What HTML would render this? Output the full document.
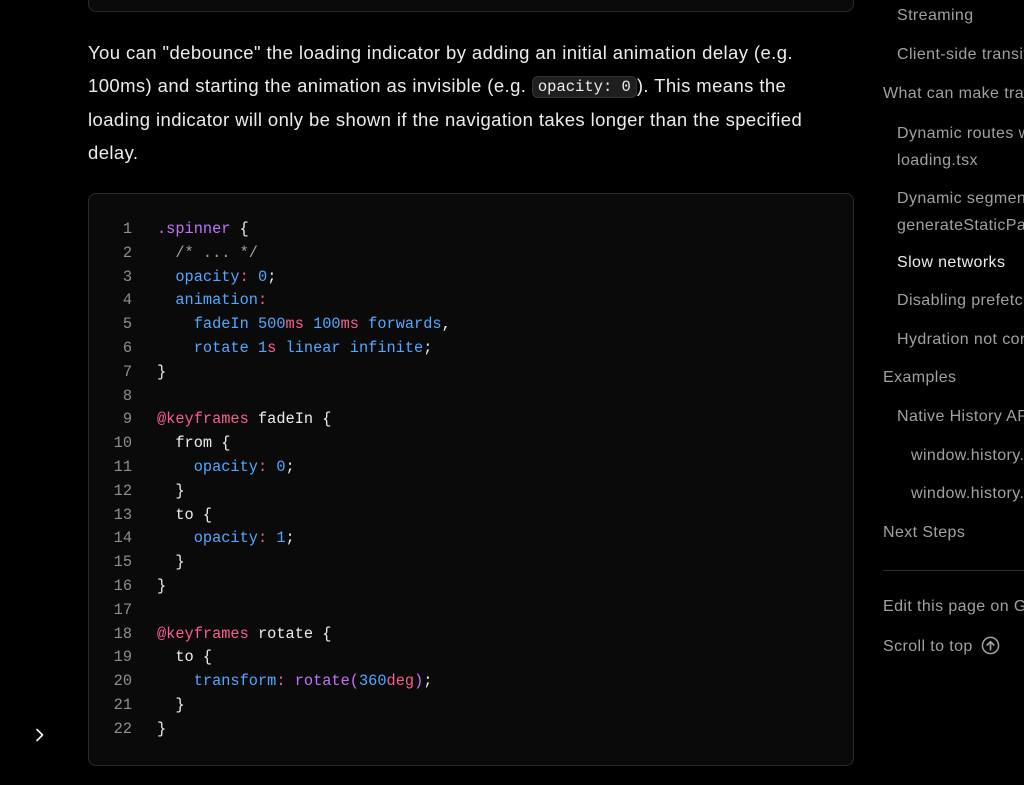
<!DOCTYPE html>
<html><head><meta charset="utf-8"><style>
html,body{margin:0;padding:0;background:#000;width:1024px;height:785px;overflow:hidden;font-family:"Liberation Sans",sans-serif;position:relative}
.abs{position:absolute}
.top{left:88px;top:-20px;width:764px;height:30px;border:1px solid #2a2a2a;border-radius:8px;background:#0a0a0a}
.p{left:88px;top:36px;color:#ededed;font-size:18.5px;letter-spacing:0.4px;line-height:33.3px;white-space:nowrap}
.ic{font-family:"Liberation Mono",monospace;font-size:15.5px;letter-spacing:0;line-height:18px;background:#1f1f1f;border:1px solid #333;border-radius:6px;padding:1px 5px;color:#ededed;display:inline-block;vertical-align:1px}
.code{left:88px;top:193px;width:764px;height:571px;border:1px solid #2a2a2a;border-radius:8px;background:#0a0a0a}
pre{margin:0;font-family:"Liberation Mono",monospace;font-size:15.3px;line-height:23.8px;color:#ededed}
.lines{left:100px;top:218px;width:32px;text-align:right;color:#8f8f8f}
.src{left:157px;top:218px}
.s{color:#c472fb}.k{color:#f75f8f}.b{color:#52a8ff}.c{color:#a1a1a1}
.sidewrap{position:absolute;left:870px;top:0;width:154px;height:785px;overflow:hidden}
.side{position:absolute;left:13px;color:#a1a1a1;font-size:16px;letter-spacing:0.4px;white-space:nowrap}
.i1{left:27px}.i2{left:41px}
</style></head><body>
<div class="abs top"></div>
<div class="abs p">You can "debounce" the loading indicator by adding an initial animation delay (e.g.<br>100ms) and starting the animation as invisible (e.g. <span class="ic">opacity: 0</span>). This means the<br>loading indicator will only be shown if the navigation takes longer than the specified<br>delay.</div>
<div class="abs code"></div>
<pre class="abs lines">1
2
3
4
5
6
7
8
9
10
11
12
13
14
15
16
17
18
19
20
21
22</pre>
<pre class="abs src"><span class="s">.spinner</span> {
  <span class="c">/* ... */</span>
  <span class="b">opacity</span><span class="k">:</span> <span class="b">0</span>;
  <span class="b">animation</span><span class="k">:</span>
    <span class="b">fadeIn 500</span><span class="k">ms</span> <span class="b">100</span><span class="k">ms</span> <span class="b">forwards</span>,
    <span class="b">rotate 1</span><span class="k">s</span> <span class="b">linear infinite</span>;
}

<span class="k">@keyframes</span> fadeIn {
  from {
    <span class="b">opacity</span><span class="k">:</span> <span class="b">0</span>;
  }
  to {
    <span class="b">opacity</span><span class="k">:</span> <span class="b">1</span>;
  }
}

<span class="k">@keyframes</span> rotate {
  to {
    <span class="b">transform</span><span class="k">:</span> <span class="s">rotate(</span><span class="b">360</span><span class="k">deg</span><span class="s">)</span>;
  }
}</pre>
<div class="sidewrap">
<div class="side i1" style="top:7px">Streaming</div>
<div class="side i1" style="top:46px">Client-side transitions</div>
<div class="side" style="top:85px">What can make transitions slow?</div>
<div class="side i1" style="top:120px;line-height:27px">Dynamic routes without<br>loading.tsx</div>
<div class="side i1" style="top:185px;line-height:27px">Dynamic segments without<br>generateStaticParams</div>
<div class="side i1" style="top:254px;color:#ededed">Slow networks</div>
<div class="side i1" style="top:292px">Disabling prefetching</div>
<div class="side i1" style="top:331px">Hydration not completed</div>
<div class="side" style="top:369px">Examples</div>
<div class="side i1" style="top:408px">Native History API</div>
<div class="side i2" style="top:447px">window.history.pushState</div>
<div class="side i2" style="top:485px">window.history.replaceState</div>
<div class="side" style="top:524px">Next Steps</div>
<div class="abs" style="left:13px;top:570px;width:141px;height:1px;background:#2e2e2e"></div>
<div class="side" style="top:598px">Edit this page on GitHub</div>
<div class="side" style="top:636px">Scroll to top <svg width="19" height="19" viewBox="0 0 20 20" style="vertical-align:-4px;margin-left:3px"><circle cx="10" cy="10" r="8.5" fill="none" stroke="#a1a1a1" stroke-width="1.6"/><path d="M10 14.5V6M6.5 9.5L10 6l3.5 3.5" fill="none" stroke="#a1a1a1" stroke-width="1.8" stroke-linecap="round" stroke-linejoin="round"/></svg></div>
</div>
<svg class="abs" style="left:32px;top:727px" width="16" height="16" viewBox="0 0 16 16"><path d="M5 2.5L10.5 8 5 13.5" fill="none" stroke="#ededed" stroke-width="1.7" stroke-linecap="round" stroke-linejoin="round"/></svg>
</body></html>
